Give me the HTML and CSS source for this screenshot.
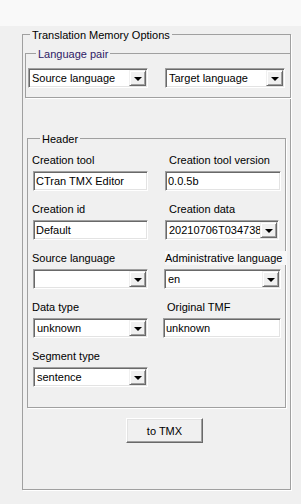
FILE: index.html
```html
<!DOCTYPE html>
<html>
<head>
<meta charset="utf-8">
<title>Translation Memory Options</title>
<link rel="stylesheet" href="styles.css">
</head>
<body>
<div class="topstrip"></div>
<fieldset class="group outer">
  <legend class="legend">Translation Memory Options</legend>

  <fieldset class="group pair">
    <legend class="legend legend-pair">Language pair</legend>
    <div class="pair-row">
      <div class="combo combo-pair"><span class="combo-text">Source language</span><span class="combo-btn"><span class="arrow"></span></span></div>
      <div class="combo combo-pair"><span class="combo-text">Target language</span><span class="combo-btn"><span class="arrow"></span></span></div>
    </div>
  </fieldset>

  <fieldset class="group header">
    <legend class="legend legend-header">Header</legend>
    <div class="fields">
      <div class="field">
        <span class="label">Creation tool</span>
        <div class="textbox">CTran TMX Editor</div>
      </div>
      <div class="field">
        <span class="label label-r">Creation tool version</span>
        <div class="textbox">0.0.5b</div>
      </div>
      <div class="field">
        <span class="label">Creation id</span>
        <div class="textbox">Default</div>
      </div>
      <div class="field">
        <span class="label label-r">Creation data</span>
        <div class="combo combo-narrow"><span class="combo-text">20210706T034738Z</span><span class="combo-btn"><span class="arrow"></span></span></div>
      </div>
      <div class="field">
        <span class="label">Source language</span>
        <div class="combo"><span class="combo-text"></span><span class="combo-btn"><span class="arrow"></span></span></div>
      </div>
      <div class="field">
        <span class="label label-admin">Administrative language</span>
        <div class="combo combo-wide"><span class="combo-text">en</span><span class="combo-btn"><span class="arrow"></span></span></div>
      </div>
      <div class="field">
        <span class="label">Data type</span>
        <div class="combo"><span class="combo-text">unknown</span><span class="combo-btn"><span class="arrow"></span></span></div>
      </div>
      <div class="field">
        <span class="label label-tmf">Original TMF</span>
        <div class="textbox textbox-wide">unknown</div>
      </div>
      <div class="field">
        <span class="label">Segment type</span>
        <div class="combo"><span class="combo-text">sentence</span><span class="combo-btn"><span class="arrow"></span></span></div>
      </div>
    </div>
  </fieldset>

  <button class="btn" type="button">to TMX</button>
</fieldset>
</body>
</html>
```

FILE: styles.css
```css
html, body {
  margin: 0;
  padding: 0;
}

body {
  width: 301px;
  height: 504px;
  overflow: hidden;
  background: #f0f0f0;
  font-family: "Liberation Sans", Arial, sans-serif;
  font-size: 11px;
  color: #000;
}

.topstrip {
  height: 26px;
  background: #f9f9f9;
}

.group {
  margin: 0;
  padding: 0;
  min-width: 0;
  border: 1px solid #a0a0a0;
  box-shadow: 1px 1px 0 #ffffff;
}

.legend {
  padding: 3px 2px 0;
  line-height: 13px;
  font-size: 11px;
  color: #000;
}

.outer {
  margin: 0 0 0 22px;
  width: 269px;
  box-sizing: border-box;
  padding: 0 0 46px;
}

.outer > .legend {
  margin-left: 7px;
}

.pair {
  margin: 3px -1px 0 2px;
  padding: 7px 0 9px 2px;
}

.legend-pair {
  margin-left: 8px;
  color: #2e1a66;
}

.pair-row {
  display: flex;
  gap: 17px;
}

.combo {
  display: flex;
  align-items: stretch;
  height: 20px;
  box-sizing: border-box;
  background: #fff;
  border: 1px solid;
  border-color: #a0a0a0 #ffffff #ffffff #a0a0a0;
  box-shadow: inset 1px 1px 0 #696969, inset -1px -1px 0 #e3e3e3;
  padding: 1px;
}

.combo-pair {
  width: 120px;
}

.combo-text {
  flex: 1;
  min-width: 0;
  overflow: hidden;
  white-space: nowrap;
  line-height: 16px;
  padding-left: 2px;
}

.combo-btn {
  flex: none;
  width: 17px;
  box-sizing: border-box;
  background: #f0f0f0;
  border: 1px solid;
  border-color: #f0f0f0 #696969 #696969 #f0f0f0;
  box-shadow: inset 1px 1px 0 #ffffff, inset -1px -1px 0 #a0a0a0;
  display: flex;
  align-items: center;
  justify-content: center;
}

.arrow {
  width: 0;
  height: 0;
  border-left: 4px solid transparent;
  border-right: 4px solid transparent;
  border-top: 4px solid #000;
  margin-top: 1px;
}

.header {
  margin: 32px 4px 0 4px;
  padding: 7px 0 20px 5px;
}

.legend-header {
  margin-left: 7px;
}

.fields {
  display: grid;
  grid-template-columns: 115px 116px;
  column-gap: 17px;
  row-gap: 11px;
}

.field {
  display: flex;
  flex-direction: column;
  gap: 4px;
}

.label {
  line-height: 14px;
  white-space: nowrap;
  margin-left: -1px;
}

.label-r {
  margin-left: 4px;
}

.label-tmf {
  margin-left: 2px;
}

.label-admin {
  margin-left: 0;
  width: 122px;
  background: #f7f7f7;
}

.textbox {
  height: 20px;
  box-sizing: border-box;
  background: #fff;
  border: 1px solid;
  border-color: #a0a0a0 #ffffff #ffffff #a0a0a0;
  box-shadow: inset 1px 1px 0 #696969, inset -1px -1px 0 #e3e3e3;
  padding: 1px 1px 1px 2px;
  line-height: 16px;
  white-space: nowrap;
  overflow: hidden;
}

.textbox-wide {
  margin-left: -2px;
}

.combo-narrow {
  width: 114px;
}

.combo-wide {
  margin-left: -1px;
}

.btn {
  display: block;
  margin: 10px 0 0 103px;
  width: 77px;
  height: 25px;
  padding: 0;
  font-family: "Liberation Sans", Arial, sans-serif;
  font-size: 11px;
  color: #000;
  background: #f0f0f0;
  border: 1px solid;
  border-color: #ffffff #696969 #696969 #ffffff;
  box-shadow: inset -1px -1px 0 #a0a0a0, inset 1px 1px 0 #e3e3e3;
}
```
